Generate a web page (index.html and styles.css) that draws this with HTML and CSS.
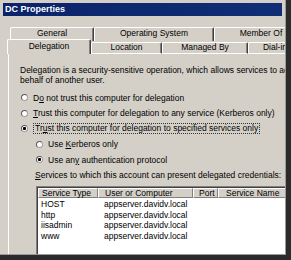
FILE: index.html
```html
<!DOCTYPE html>
<html lang="en">
  <head>
    <meta charset="UTF-8" />
    <title>DC Properties</title>
    <link rel="stylesheet" href="styles.css">
  </head>
  <body>
    <div class="shot">
      <div class="window">
        <div class="titlebar">DC Properties</div>

        <div class="tabs">
          <div class="tab-row back">
            <div class="tab w-general">General</div>
            <div class="tab w-os">Operating System</div>
            <div class="tab w-member">Member Of</div>
          </div>
          <div class="tab-row front">
            <div class="tab selected w-deleg">Delegation</div>
            <div class="tab w-loc">Location</div>
            <div class="tab w-managed">Managed By</div>
            <div class="tab w-dial">Dial-in</div>
          </div>
        </div>

        <div class="panel">
          <p class="intro">
            Delegation is a security-sensitive operation, which allows services to act on<br>
            behalf of another user.
          </p>

          <div class="options">
            <div class="radio"><span class="dot"></span><span>D<u>o</u> not trust this computer for delegation</span></div>
            <div class="radio"><span class="dot"></span><span><u>T</u>rust this computer for delegation to any service (Kerberos only)</span></div>
            <div class="radio"><span class="dot checked"></span><span class="focus">Tr<u>u</u>st this computer for delegation to specified services only</span></div>
            <div class="radio sub"><span class="dot"></span><span>Use <u>K</u>erberos only</span></div>
            <div class="radio sub"><span class="dot checked"></span><span>Use an<u>y</u> authentication protocol</span></div>
            <div class="services-label"><u>S</u>ervices to which this account can present delegated credentials:</div>
          </div>

          <div class="listview">
            <div class="list-inner">
              <div class="list-row header">
                <div class="col c1">Service Type</div>
                <div class="col c2">User or Computer</div>
                <div class="col c3">Port</div>
                <div class="col c4">Service Name</div>
              </div>
              <div class="list-body">
                <div class="list-row">
                  <div class="col c1">HOST</div>
                  <div class="col c2">appserver.davidv.local</div>
                  <div class="col c3"></div>
                  <div class="col c4"></div>
                </div>
                <div class="list-row">
                  <div class="col c1">http</div>
                  <div class="col c2">appserver.davidv.local</div>
                  <div class="col c3"></div>
                  <div class="col c4"></div>
                </div>
                <div class="list-row">
                  <div class="col c1">iisadmin</div>
                  <div class="col c2">appserver.davidv.local</div>
                  <div class="col c3"></div>
                  <div class="col c4"></div>
                </div>
                <div class="list-row">
                  <div class="col c1">www</div>
                  <div class="col c2">appserver.davidv.local</div>
                  <div class="col c3"></div>
                  <div class="col c4"></div>
                </div>
              </div>
            </div>
          </div>
        </div>
      </div>
    </div>
  </body>
</html>
```

FILE: styles.css
```css
/* General Styling */
* {
  box-sizing: border-box;
}

body {
  margin: 0;
  font-family: "Liberation Sans", Arial, sans-serif;
  font-size: 8.5px;
  color: #000;
  background-color: #2b2b2b;
}

.shot {
  width: 291px;
  height: 260px;
  overflow: hidden;
  background-color: #2b2b2b;
}

.window {
  width: 286px;
  height: 255px;
  padding: 3px 3px 0;
  overflow: hidden;
  background-color: #d4d0c8;
  border-right: 1px solid #9a9a9a;
  border-bottom: 1px solid #9a9a9a;
}

/* Title bar */
.titlebar {
  height: 13px;
  padding-left: 2px;
  line-height: 13px;
  font-size: 9px;
  font-weight: bold;
  color: #fff;
  background: linear-gradient(to right, #0a246a, #102e76);
}

/* Tabs */
.tabs {
  margin-top: 11px;
}

.tab-row {
  display: flex;
  align-items: flex-start;
  white-space: nowrap;
}

.tab {
  flex: none;
  text-align: center;
  background-color: #d4d0c8;
  border-top: 1px solid #fff;
  border-left: 1px solid #fff;
  border-right: 1px solid #404040;
  border-radius: 2px 2px 0 0;
  box-shadow: inset -1px 0 #808080;
}

.back {
  height: 14px;
  margin-left: 7px;
}

.back .tab {
  height: 14px;
  line-height: 11px;
}

.front {
  height: 13px;
  margin-left: 4px;
}

.front .tab {
  height: 12px;
  margin-top: 1px;
  line-height: 9px;
  border-bottom: 1px solid #fff;
}

.front .tab.selected {
  height: 15px;
  margin-top: -2px;
  line-height: 13px;
  border-bottom: none;
}

.w-general { width: 84px; }
.w-os { width: 120px; }
.w-member { width: 94px; }
.w-deleg { width: 84px; }
.w-loc { width: 71px; }
.w-managed { width: 86px; }
.w-dial { width: 54px; }

/* Tab page */
.panel {
  height: 220px;
  margin-left: 5px;
  padding: 11px 0 0 11px;
  border-left: 1px solid #fff;
  white-space: nowrap;
}

.intro {
  margin: 0;
  line-height: 10px;
}

.options {
  margin-top: 5px;
}

.radio {
  display: flex;
  align-items: center;
  height: 15.5px;
}

.radio.sub {
  padding-left: 15px;
}

.dot {
  flex: none;
  width: 7px;
  height: 7px;
  margin: 0 5px 0 1px;
  border: 1px solid #5a5a5a;
  border-right-color: #a0a0a0;
  border-bottom-color: #a0a0a0;
  border-radius: 50%;
  background-color: #fff;
}

.dot.checked {
  background: radial-gradient(circle, #000 1.3px, #fff 1.8px);
}

.focus {
  padding: 0 1px;
  line-height: 9px;
  border: 1px dotted #333;
}

.services-label {
  height: 15.5px;
  line-height: 15.5px;
  padding-left: 15px;
}

/* List view */
.listview {
  width: 262px;
  height: 80px;
  margin: 3px 0 0 16px;
  background-color: #fff;
  border-top: 1px solid #808080;
  border-left: 1px solid #808080;
}

.list-inner {
  height: 100%;
  border-top: 1px solid #404040;
  border-left: 1px solid #404040;
}

.list-row {
  display: grid;
  grid-template-columns: 60px 95px 25px 1fr;
}

.list-row.header .col {
  height: 10px;
  line-height: 8px;
  background-color: #d4d0c8;
  border-top: 1px solid #fff;
  border-left: 1px solid #fff;
  border-right: 1px solid #808080;
  border-bottom: 1px solid #808080;
}

.list-body {
  padding-top: 1px;
}

.list-body .col {
  line-height: 10.5px;
}

.c1 { padding-left: 3px; }
.c2 { padding-left: 6px; }
.c3 { padding-left: 5px; }
.c4 { padding-left: 7px; }
```
